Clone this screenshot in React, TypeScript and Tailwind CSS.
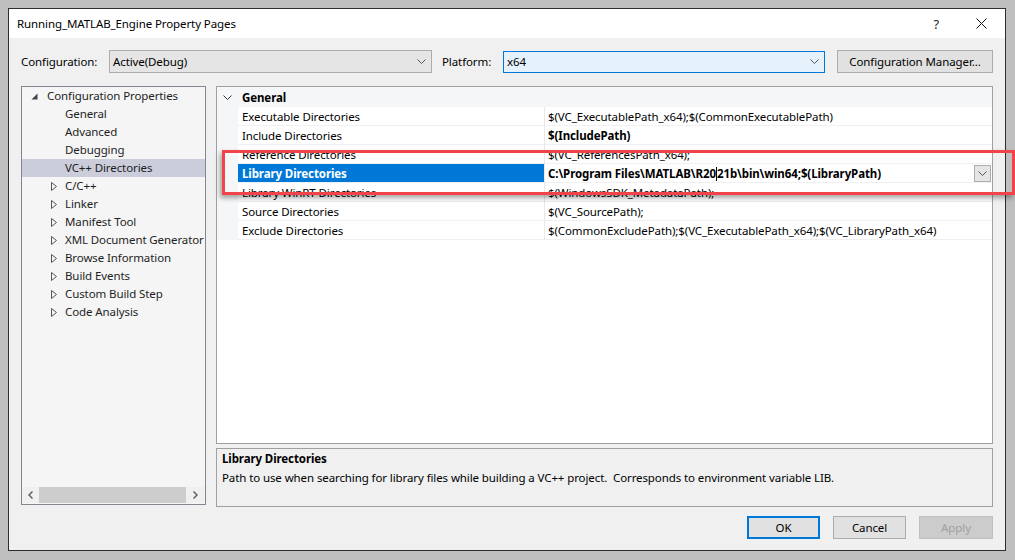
import React from "react";

const Chev = ({ className = "" }: { className?: string }) => (
  <svg width="9" height="5" viewBox="0 0 9 5" className={className}>
    <path d="M0.5 0.5 L4.5 4.5 L8.5 0.5" fill="none" stroke="currentColor" strokeWidth="1" />
  </svg>
);

const Expanded = () => (
  <svg width="7" height="7" viewBox="0 0 7 7" className="shrink-0">
    <path d="M6.5 0.5 L6.5 6.5 L0.5 6.5 Z" fill="#444" />
  </svg>
);

const Collapsed = () => (
  <svg width="6" height="9" viewBox="0 0 6 9" className="shrink-0">
    <path d="M0.5 0.5 L5.5 4.5 L0.5 8.5 Z" fill="none" stroke="#555" strokeWidth="1" />
  </svg>
);

const treeChildren = ["General", "Advanced", "Debugging", "VC++ Directories"];
const treeCollapsed = [
  "C/C++",
  "Linker",
  "Manifest Tool",
  "XML Document Generator",
  "Browse Information",
  "Build Events",
  "Custom Build Step",
  "Code Analysis",
];

const rows: { name: string; value: string; bold?: boolean; sel?: boolean }[] = [
  { name: "Executable Directories", value: "$(VC_ExecutablePath_x64);$(CommonExecutablePath)" },
  { name: "Include Directories", value: "$(IncludePath)", bold: true },
  { name: "Reference Directories", value: "$(VC_ReferencesPath_x64);" },
  { name: "Library Directories", value: "", sel: true },
  { name: "Library WinRT Directories", value: "$(WindowsSDK_MetadataPath);" },
  { name: "Source Directories", value: "$(VC_SourcePath);" },
  {
    name: "Exclude Directories",
    value: "$(CommonExcludePath);$(VC_ExecutablePath_x64);$(VC_LibraryPath_x64)",
  },
];

export default function App() {
  return (
    <div className="w-[1015px] h-[560px] bg-[#bfbfbf] relative overflow-hidden pt-[8px] pl-[8px] font-['Noto_Sans',sans-serif] text-[11.5px] tracking-[-0.1px] leading-[16px] text-black">
      <div className="w-[998px] h-[543px] border border-[#2d2d2d] bg-[#f0f0f0] flex flex-col">
        {/* Title bar */}
        <div className="h-[29px] bg-white flex items-center pl-[8px] pr-[18px] shrink-0">
          <span>Running_MATLAB_Engine Property Pages</span>
          <span className="ml-auto text-[13px] text-[#222]">?</span>
          <svg width="11" height="11" viewBox="0 0 11 11" className="ml-[37px]">
            <path d="M0.5 0.5 L10.5 10.5 M10.5 0.5 L0.5 10.5" stroke="#111" strokeWidth="1" />
          </svg>
        </div>

        <div className="px-[12px] flex flex-col">
          {/* Config row */}
          <div className="mt-[12px] h-[23px] flex items-center">
            <span className="w-[88px] shrink-0 pt-[1px]">Configuration:</span>
            <div className="w-[323px] h-[23px] border border-[#adadad] bg-[#e5e5e5] flex items-center pl-[3px] pr-[5px] shrink-0">
              <span className="pt-[1px]">Active(Debug)</span>
              <Chev className="ml-auto text-[#555]" />
            </div>
            <span className="ml-[10px] w-[61px] shrink-0 pt-[1px]">Platform:</span>
            <div className="w-[322px] h-[22px] border border-[#0078d7] bg-[#e5f1fb] flex items-center pl-[3px] pr-[5px] shrink-0">
              <span className="pt-[1px]">x64</span>
              <Chev className="ml-auto text-[#555]" />
            </div>
            <div className="ml-auto w-[156px] h-[23px] border border-[#adadad] bg-[#e1e1e1] flex items-center justify-center shrink-0">
              Configuration Manager...
            </div>
          </div>

          {/* Main */}
          <div className="mt-[13px] flex gap-[10px] h-[421px]">
            {/* Tree */}
            <div className="w-[185px] h-[419px] border border-[#828790] bg-[#f5f5f5] flex flex-col shrink-0 text-[#1e1e1e] overflow-hidden">
              <div className="flex-1 overflow-hidden">
                <div className="h-[18px] flex items-center whitespace-nowrap">
                  <span className="w-[9px] shrink-0" />
                  <Expanded />
                  <span className="ml-[9px]">Configuration Properties</span>
                </div>
                {treeChildren.map((t) => (
                  <div
                    key={t}
                    className={`h-[18px] flex items-center pl-[43px] whitespace-nowrap ${
                      t === "VC++ Directories" ? "bg-[#cbcdda]" : ""
                    }`}
                  >
                    <span>{t}</span>
                  </div>
                ))}
                {treeCollapsed.map((t) => (
                  <div key={t} className="h-[18px] flex items-center whitespace-nowrap">
                    <span className="w-[29px] shrink-0" />
                    <Collapsed />
                    <span className="ml-[8px]">{t}</span>
                  </div>
                ))}
              </div>
              <div className="h-[16px] mb-[1px] flex items-center bg-[#f0f0f0] shrink-0">
                <div className="w-[17px] h-full flex items-center justify-center">
                  <svg width="5" height="8" viewBox="0 0 5 8">
                    <path d="M4.5 0.5 L1 4 L4.5 7.5" fill="none" stroke="#606060" strokeWidth="1.5" />
                  </svg>
                </div>
                <div className="w-[147px] h-full bg-[#cdcdcd]" />
                <div className="flex-1 h-full flex items-center justify-center">
                  <svg width="5" height="8" viewBox="0 0 5 8">
                    <path d="M0.5 0.5 L4 4 L0.5 7.5" fill="none" stroke="#606060" strokeWidth="1.5" />
                  </svg>
                </div>
              </div>
            </div>

            {/* Right column */}
            <div className="w-[777px] flex flex-col">
              <div className="h-[358px] border border-[#a0a0a0] bg-white flex flex-col overflow-hidden">
                <div className="h-[20px] bg-[#f5f6f7] flex items-center shrink-0">
                  <Chev className="ml-[6px] text-[#333]" />
                  <span className="ml-[10px] font-bold pt-[2px]">General</span>
                </div>
                {rows.map((r) => (
                  <div key={r.name} className="h-[19px] flex shrink-0">
                    <div className="w-[21px] bg-[#f5f6f7]" />
                    <div
                      className={`w-[306px] flex items-center pl-[4px] pt-[2px] border-b border-[#f0f0f0] whitespace-nowrap ${
                        r.sel ? "bg-[#0078d7] text-white font-bold border-[#0078d7]" : ""
                      }`}
                    >
                      {r.name}
                    </div>
                    <div className="w-[1px] bg-[#e8e8e8]" />
                    <div
                      className={`flex-1 flex items-center pl-[3px] border-b border-[#f0f0f0] whitespace-nowrap ${
                        r.bold || r.sel ? "font-bold" : ""
                      }`}
                    >
                      {r.sel ? (
                        <>
                          <span className="pt-[2px]">C:\Program Files\MATLAB\R20</span>
                          <span className="w-[1px] h-[14px] bg-black mt-[1px]" />
                          <span className="pt-[2px]">21b\bin\win64;$(LibraryPath)</span>
                          <div className="ml-auto mr-[1px] w-[17px] h-[17px] border border-[#adadad] bg-[#e5e5e5] flex items-center justify-center">
                            <Chev className="text-[#555]" />
                          </div>
                        </>
                      ) : (
                        <span className="pt-[2px]">{r.value}</span>
                      )}
                    </div>
                  </div>
                ))}
                <div className="flex-1 bg-white" />
              </div>
              <div className="mt-[4px] h-[59px] border border-[#a0a0a0] bg-[#f0f0f0] px-[5px] pt-[2px]">
                <div className="font-bold h-[16px]">Library Directories</div>
                <div className="mt-[3px] h-[16px]">
                  Path to use when searching for library files while building a VC++ project.&nbsp; Corresponds to
                  environment variable LIB.
                </div>
              </div>
            </div>
          </div>

          {/* Buttons */}
          <div className="mt-[9px] flex justify-end gap-[13px]">
            <div className="w-[73px] h-[23px] border-2 border-[#0078d7] bg-[#e1e1e1] flex items-center justify-center">
              OK
            </div>
            <div className="w-[73px] h-[23px] border border-[#adadad] bg-[#e1e1e1] flex items-center justify-center">
              Cancel
            </div>
            <div className="w-[74px] h-[23px] border border-[#bfbfbf] bg-[#cccccc] text-[#a0a0a0] flex items-center justify-center">
              Apply
            </div>
          </div>
        </div>
      </div>

      {/* Red highlight overlay */}
      <div className="absolute left-[222px] top-[150px] w-[793px] h-[45px] border-[3px] border-[#f0434a] shadow-[-2px_3px_5px_rgba(0,0,0,0.35)]" />
    </div>
  );
}
